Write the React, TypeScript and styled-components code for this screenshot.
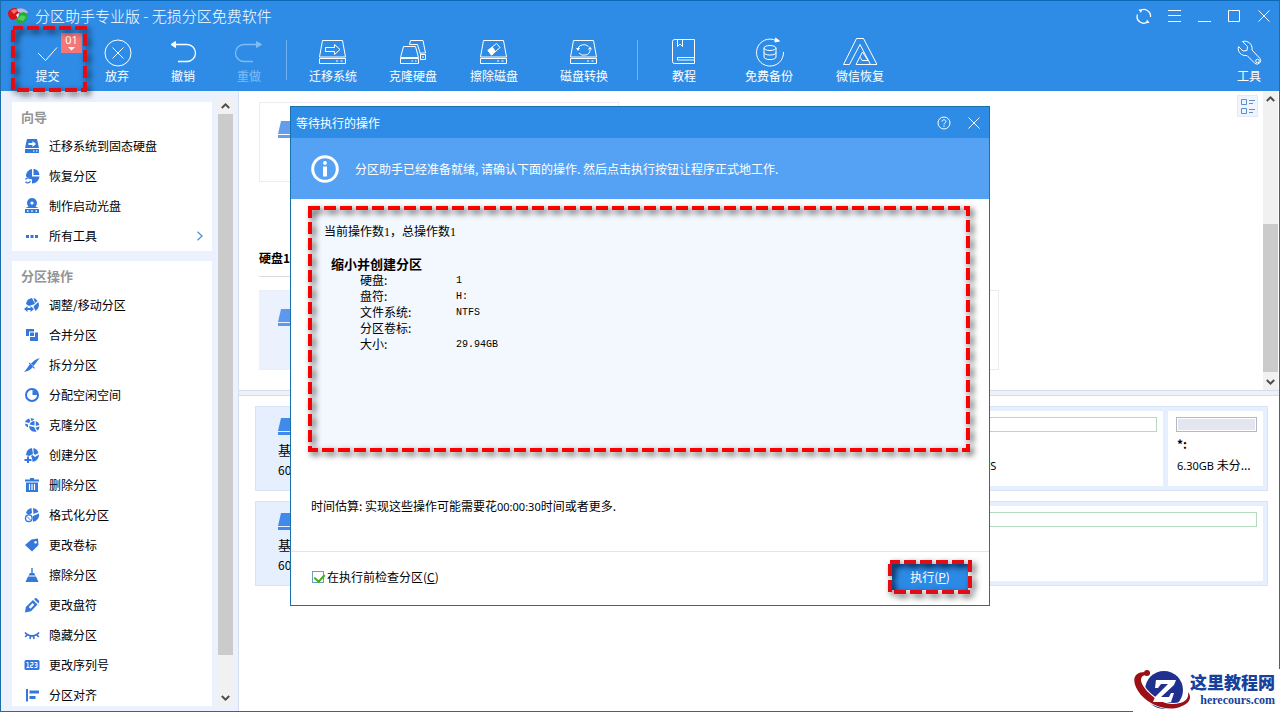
import React from "react";
import styled, { createGlobalStyle } from "styled-components";

const Global = createGlobalStyle`
  * { box-sizing: border-box; }
  html, body { margin: 0; padding: 0; height: 100%; }
  body {
    font-family: "Noto Sans CJK SC", "Noto Sans", sans-serif;
    font-size: 12px;
    line-height: 16px;
    color: #000;
    background: #fff;
    overflow: hidden;
  }
  button {
    font: inherit;
    color: inherit;
    background: none;
    border: 0;
    padding: 0;
    margin: 0;
    text-align: left;
  }
  ul, dl, dd { list-style: none; margin: 0; padding: 0; }
  h1, h2, p { margin: 0; font-size: inherit; font-weight: inherit; }
  svg { display: block; flex: none; }
`;

/* ---------- window frame ---------- */

const AppWindow = styled.div`
  position: relative;
  display: flex;
  flex-direction: column;
  height: 100vh;
  border: 1px solid #1c6ea8;
  border-top-color: #0b69ba;
  background: #fff;
`;

const Header = styled.header`
  position: relative;
  z-index: 1;
  flex: none;
  color: #fff;
  background: #2e8ce7;
`;

const TitleBar = styled.div`
  display: flex;
  align-items: center;
  height: 30px;
  padding-left: 7px;
`;

const AppTitle = styled.h1`
  flex: 1;
  margin-left: 7px;
  font-size: 15px;
  line-height: 20px;
  font-weight: 300;
`;

const WindowButton = styled.button`
  display: flex;
  align-items: center;
  justify-content: center;
  width: 30px;
  height: 30px;
`;

const Toolbar = styled.nav`
  display: flex;
  height: 60px;
  padding-left: 10px;
`;

const ToolButton = styled.button<{ $w: number; $end?: boolean }>`
  position: relative;
  display: flex;
  flex-direction: column;
  align-items: center;
  flex: none;
  width: ${(p) => p.$w}px;
  margin-left: ${(p) => (p.$end ? "auto" : "0")};
  padding-top: 5px;
  color: #fff;
  &:disabled { color: #7fbcf5; }
`;

const ToolSeparator = styled.span`
  width: 1px;
  margin: 9px 6px 11px 4px;
  background: #6fb1f1;
`;

const Badge = styled.span`
  position: absolute;
  top: 2px;
  left: 50px;
  display: flex;
  flex-direction: column;
  align-items: center;
  width: 21px;
  height: 20px;
  font-family: "Noto Sans", sans-serif;
  font-size: 11px;
  line-height: 14px;
  background: #f57676;
`;

/* ---------- red dashed marker ---------- */

const MarkerBox = styled.span<{ $inset: string }>`
  position: absolute;
  inset: ${(p) => p.$inset};
  pointer-events: none;
`;

const MarkerSvg = styled.svg<{ $color?: string }>`
  width: 100%;
  height: 100%;
  overflow: visible;
  filter: drop-shadow(3px 3px 3px rgba(0, 0, 0, 0.7));
  rect {
    x: 2px;
    y: 2px;
    width: calc(100% - 4px);
    height: calc(100% - 4px);
    fill: none;
    stroke: ${(p) => p.$color || "#fb0000"};
    stroke-width: 4;
    stroke-dasharray: 12 4;
    stroke-dashoffset: 2;
  }
`;

function Marker({ inset, color }: { inset: string; color?: string }) {
  return (
    <MarkerBox $inset={inset} aria-hidden="true">
      <MarkerSvg $color={color}>
        <rect />
      </MarkerSvg>
    </MarkerBox>
  );
}

/* ---------- scroll bar ---------- */

const ScrollTrack = styled.div`
  display: flex;
  flex-direction: column;
  flex: none;
  width: 15px;
  background: #f1f1f1;
`;

const ScrollArrow = styled.button`
  display: flex;
  align-items: center;
  justify-content: center;
  flex: none;
  height: 16px;
`;

const ScrollSpace = styled.div<{ $grow: number; $thumb?: boolean }>`
  flex: ${(p) => p.$grow} 1 0;
  background: ${(p) => (p.$thumb ? "#cbcbcb" : "transparent")};
`;

function ScrollBar({ before, thumb, after }: { before: number; thumb: number; after: number }) {
  return (
    <ScrollTrack>
      <ScrollArrow aria-label="向上滚动">
        <svg width="9" height="6" fill="none" stroke="#4d4d4d" strokeWidth="2">
          <path d="M.8 5 4.500 1.400 8.200 5" />
        </svg>
      </ScrollArrow>
      <ScrollSpace $grow={before} />
      <ScrollSpace $grow={thumb} $thumb />
      <ScrollSpace $grow={after} />
      <ScrollArrow aria-label="向下滚动">
        <svg width="9" height="6" fill="none" stroke="#4d4d4d" strokeWidth="2">
          <path d="M.8 1 4.500 4.600 8.200 1" />
        </svg>
      </ScrollArrow>
    </ScrollTrack>
  );
}

/* ---------- side bar ---------- */

const Workspace = styled.div`
  display: flex;
  flex: 1;
  min-height: 0;
`;

const Sidebar = styled.aside`
  display: flex;
  flex: none;
  justify-content: space-between;
  width: 238px;
  padding: 7px 5px 5px 11px;
  border-right: 1px solid #d6dff0;
  background: #ecf2fd;
`;

const SideList = styled.div`
  display: flex;
  flex-direction: column;
  gap: 10px;
  width: 200px;
  padding-top: 4px;
  overflow: hidden;
`;

const SideCard = styled.section`
  flex: none;
  background: #fff;
`;

const SideHeading = styled.h2`
  height: 29px;
  padding-left: 9px;
  font-size: 13px;
  line-height: 29px;
  font-weight: 700;
  color: #949494;
`;

const SideItem = styled.button`
  display: flex;
  align-items: center;
  gap: 9px;
  width: 100%;
  height: 30px;
  padding: 0 8px 0 12px;
  span { flex: 1; }
`;

/* ---------- main area ---------- */

const Main = styled.main`
  display: flex;
  flex-direction: column;
  flex: 1;
  min-width: 0;
`;

const VolumePane = styled.section`
  display: flex;
  flex: none;
  padding-right: 1px;
`;

const VolumeArea = styled.div`
  flex: 1;
  padding: 11px 0 20px 20px;
`;

const VolumeGrid = styled.div`
  display: flex;
  gap: 20px;
`;

const VolumeCard = styled.div<{ $selected?: boolean }>`
  width: 360px;
  height: 80px;
  padding: 18px;
  border: 1px solid ${(p) => (p.$selected ? "#e9effd" : "#ececf0")};
  background: ${(p) => (p.$selected ? "#ecf1fe" : "#fff")};
`;

const DiskHeading = styled.h2`
  width: 720px;
  margin: 68px 0 13px;
  padding-bottom: 10px;
  border-bottom: 1px solid #dcdcdc;
  font-weight: 700;
`;

const PaneTools = styled.div`
  width: 26px;
  padding-top: 4px;
`;

const ViewButton = styled.button`
  display: flex;
  align-items: center;
  justify-content: center;
  width: 21px;
  height: 22px;
  border: 1px solid #e2e9f7;
  background: #f0f4fd;
`;

const Splitter = styled.div`
  flex: none;
  height: 6px;
  border: solid #d5ddea;
  border-width: 1px 0;
  background: #eef1f8;
`;

const DiskPane = styled.section`
  display: flex;
  flex-direction: column;
  gap: 10px;
  flex: 1;
  padding: 10px 11px 10px 16px;
`;

const DiskRow = styled.div<{ $cols: string }>`
  display: grid;
  grid-template-columns: ${(p) => p.$cols};
  gap: 5px;
  height: 85px;
  padding: 4px;
  border: 1px solid #d8e3f4;
  background: #e6effd;
`;

const DiskInfo = styled.div`
  padding: 7px 0 0 18px;
  line-height: 20px;
  svg { margin-bottom: 5px; }
`;

const DiskKind = styled.div`
  font-size: 13px;
`;

const PartitionCell = styled.div`
  min-width: 0;
  padding: 6px 6px 6px 8px;
  line-height: 21px;
  background: #fff;
`;

const UsageBar = styled.div<{ $free?: boolean }>`
  height: 15px;
  margin-bottom: 1px;
  padding: 1px;
  border: 1px solid ${(p) => (p.$free ? "#b3b8c6" : "#b5dabd")};
  background: ${(p) => (p.$free ? "#e3e6ef" : "#fff")};
  background-clip: content-box;
`;

const CellLine = styled.div<{ $bold?: boolean }>`
  padding-left: 1px;
  font-weight: ${(p) => (p.$bold ? 700 : 400)};
  white-space: nowrap;
`;

const Latin = styled.span`
  font-family: "Noto Sans", sans-serif;
  font-size: 11px;
`;

/* ---------- pending operations dialog ---------- */

const DialogLayer = styled.div`
  position: absolute;
  inset: 0;
  z-index: 2;
  display: flex;
  align-items: center;
  justify-content: center;
`;

const Dialog = styled.section`
  width: 700px;
  border: 1px solid #1a72ac;
  background: #fff;
`;

const DialogTitle = styled.header`
  display: flex;
  align-items: center;
  height: 31px;
  padding-left: 5px;
  color: #fff;
  background: #2e8ce7;
  h2 { flex: 1; }
`;

const Banner = styled.div`
  display: flex;
  align-items: center;
  gap: 16px;
  height: 61px;
  padding-left: 20px;
  color: #fff;
  background: #55a1f3;
`;

const DialogBody = styled.div`
  padding: 9px 21px 0 19px;
`;

const Summary = styled.div`
  position: relative;
  min-height: 242px;
  padding: 16px 14px;
  background: #f3f7fe;
`;

const SummaryCount = styled.p`
  font-family: "Liberation Serif", "Noto Sans CJK SC", serif;
`;

const OperationName = styled.h2`
  margin: 16px 0 0 7px;
  font-size: 13px;
  font-weight: 700;
`;

const Details = styled.dl`
  display: grid;
  grid-template-columns: 96px 1fr;
  grid-auto-rows: 16px;
  margin-left: 36px;
  dd {
    font-family: "Liberation Mono", monospace;
    font-size: 10px;
    line-height: 18px;
  }
`;

const Estimate = styled.p`
  padding: 48px 1px 36px;
`;

const DialogFooter = styled.footer`
  display: flex;
  align-items: center;
  justify-content: space-between;
  height: 54px;
  padding: 0 21px 4px;
  border-top: 1px solid #e2e6ea;
`;

const CheckLabel = styled.label`
  display: flex;
  align-items: center;
  gap: 3px;
`;

const CheckBox = styled.input`
  appearance: none;
  position: relative;
  width: 12px;
  height: 12px;
  margin: 0;
  border: 1px solid #6f9cc4;
  background: #fff;
  &:checked::after {
    content: "";
    position: absolute;
    top: 0;
    left: 3px;
    width: 5px;
    height: 8px;
    border: solid #3aaf1e;
    border-width: 0 2px 2px 0;
    transform: rotate(42deg);
  }
`;

const RunButton = styled.button`
  position: relative;
  width: 76px;
  height: 26px;
  color: #fff;
  text-align: center;
  background: #2b8ae6;
  box-shadow: inset 3px 3px 4px rgba(0, 30, 90, 0.45);
`;

/* ---------- site mark ---------- */

const SiteMark = styled.div`
  position: absolute;
  right: -1px;
  bottom: -1px;
  display: flex;
  width: 147px;
  height: 43px;
  background: #fff;
  color: #17419b;
`;

const SiteText = styled.div`
  padding-top: 2px;
  margin-left: -1px;
  font-size: 17px;
  line-height: 22px;
  font-weight: 900;
  text-align: right;
  white-space: nowrap;
`;

const SiteHost = styled.div`
  font-family: "Liberation Serif", serif;
  font-size: 12px;
  line-height: 14px;
  font-weight: 700;
`;

/* ---------- icons ---------- */

const line = { fill: "none", stroke: "currentColor", strokeWidth: 1 };

const DriveBase = () => (
  <>
    <path d="M6.500 4.500h20l3 16.500h-26z" />
    <path d="M3.500 22.500h26v5h-26z" />
    <path d="M20 25h2M24.500 25h2" />
  </>
);

const toolIcons: Record<string, React.ReactNode> = {
  submit: <path d="M7 17l7.500 7.500L26 11.500" />,
  discard: (
    <>
      <circle cx="18" cy="17" r="13" />
      <path d="M12.500 11.500l11 11M23.500 11.500l-11 11" />
    </>
  ),
  undo: (
    <>
      <path d="M8 8.500h13a8.500 8.500 0 0 1 0 17H12" strokeWidth="1.300" />
      <path d="M9.500 5.500v6L5 8.500z" fill="currentColor" />
    </>
  ),
  redo: (
    <>
      <path d="M25 8.500H12a8.500 8.500 0 0 0 0 17h9" strokeWidth="1.300" />
      <path d="M24.500 5.500v6l5-3z" fill="currentColor" />
    </>
  ),
  migrate: (
    <>
      <DriveBase />
      <path d="M9.500 11.500h9v-3l5.500 5-5.500 5v-3h-9z" />
    </>
  ),
  clone: (
    <>
      <path d="M4.500 22.500h18v5h-18zM7.500 10.500h12l3 11h-18zM15.500 25h1.500M19 25h1.500" />
      <path d="M13.500 8.500l1-4H27l2.500 12.500H24.500M24.500 18.500h5v5h-5M26 21h2" />
      <path d="M13.500 8.500h8l3 10v5" />
    </>
  ),
  wipe: (
    <>
      <DriveBase />
      <path d="M11 14.500l8.500-7 3.500 4-8.500 7.500z" />
      <path d="M11 14.500l4-3.500 3.500 4.500-4 3.500z" fill="currentColor" />
    </>
  ),
  convert: (
    <>
      <DriveBase />
      <path d="M11 12.500a6 5 0 0 1 10.500-2M23 14a6 5 0 0 1-11 3" />
      <path d="M9 12h4l-2 3zM21 13.500h4L23 10.500z" fill="currentColor" stroke="none" />
    </>
  ),
  guide: (
    <>
      <path d="M7.500 3.500h20v24h-20a2 2 0 0 1-2-2V5.500a2 2 0 0 1 2-2z" />
      <path d="M10.500 3.500v7l2.500-2.500 2.500 2.500v-7M27.500 21.500h-17v2.500h17" />
    </>
  ),
  backup: (
    <>
      <path d="M24 4.500A13.500 13.500 0 1 0 31.500 16" />
      <path d="M23.500 2l4 3-4.500 1z" fill="currentColor" />
      <ellipse cx="18" cy="12" rx="6" ry="2.500" />
      <path d="M12 12v9c0 3.400 12 3.400 12 0v-9M12 16.500c0 3.400 12 3.400 12 0" />
    </>
  ),
  recover: (
    <>
      <path d="M13.500 2.500h7L34 28.500h-6.500L17 8.500 6.500 28.500H.5z" />
      <path d="M13 28.500L19.500 16l5.500 8.500h-6l-1.500-3M13 28.500h14.500" />
    </>
  ),
  tools: (
    <>
      <path d="M10.500 5.500l5 5-.5 4-4 .5-4.500-4.500C5 15 9 20.500 15 19.500l8 8a3.600 3.600 0 0 0 5-5L20 14C21 8 15.500 4 10.500 5.500z" />
      <circle cx="25.500" cy="25" r="1.800" />
    </>
  ),
};

const ToolIcon = ({ name }: { name: string }) => (
  <svg width="34" height="32" viewBox="0 0 34 32" {...line}>
    {toolIcons[name]}
  </svg>
);

const sideIcons: Record<string, React.ReactNode> = {
  migrate: (
    <>
      <path d="M3 1h10l2 9H1zM1 11h14v4H1z" />
      <path d="M4.500 5h4V3L12 6 8.500 9V7h-4z" fill="#fff" />
      <path d="M9 13h1.500M12 13h1.500" stroke="#fff" />
    </>
  ),
  restore: (
    <>
      <path d="M8 1v7.500h7.500A7.200 7.200 0 0 1 8 15.500v-4L2 8.500A7 7 0 0 1 8 1z" />
      <path d="M9.500 .8a7 7 0 0 1 6 6.200h-6z" />
      <path d="M1.500 11.500a3 3 0 0 1 5-.5M6.500 13a3 3 0 0 1-5 .8" fill="none" stroke="#3b7ad9" strokeWidth="1.300" />
    </>
  ),
  boot: (
    <>
      <path d="M8 0a5 5 0 0 1 3.500 8.500L14.500 10h-13l3-1.500A5 5 0 0 1 8 0zM1 11h14v4H1z" />
      <circle cx="8" cy="5" r="1.600" fill="#fff" />
      <path d="M3 13h1.500M7.200 13h1.500M11.500 13H13" stroke="#fff" strokeWidth="1.500" />
    </>
  ),
  all: <path d="M2 7h3v3H2zM6.500 7h3v3h-3zM11 7h3v3h-3z" />,
  resize: (
    <>
      <path d="M2 7a7 7 0 0 1 6-6l3 6-6 2zM9.500 1a7 7 0 0 1 4 3l-2.500 2zM14.200 5a7 7 0 0 1-2.700 9l-2-4.500z" />
      <path d="M0 12l3.500-3v2h3V9L10 12l-3.500 3v-2h-3v2z" />
    </>
  ),
  merge: <path d="M2 2h8v2.500H5V9H2zM11 5.500h3V14H6v-4h5zM6 5.500h4V9H6z" />,
  split: (
    <path d="M15.800 1L9.500 9 7 6.500C10 3.500 13 1.500 15.800 1zM6 7.200l2.800 2.800C7 12.500 4 14.500 0 15 2.500 13 3.500 9.500 6 7.200zM5.500 5.500l5.500 5.500-.8.800-5.500-5.500z" />
  ),
  free: (
    <>
      <circle cx="8" cy="8" r="6" fill="none" stroke="#2f74dc" strokeWidth="2" />
      <path d="M8.500 3v5h5A5 5 0 0 0 8.500 3z" />
    </>
  ),
  clone: (
    <>
      <path d="M1 5a6 6 0 0 1 4-3.500L6.500 4 5 6zM6.500 1.200a6 6 0 0 1 4 1.300L7.500 4zM.8 6.500L4 7.500v3a5 5 0 0 1-3.200-4z" />
      <path d="M5.500 7.500a5.500 5.500 0 0 1 5-3.500v4.500zM11.800 4a5.500 5.500 0 0 1 3.700 4l-3.700 1zM5.200 9l4.800 1 2.500 4.500A5.500 5.500 0 0 1 5.200 9zM15.500 9.500a5 5 0 0 1-2 4.200L11.500 10.500z" />
    </>
  ),
  create: (
    <>
      <path d="M2 8a7 7 0 0 1 6-7l1 6-4 2zM9.500 1a7 7 0 0 1 5 5L11 8l-1.500-2zM15 7.500a7 7 0 0 1-6.500 7.300L8 11l-1-2 1.500-1 2.500 2z" />
      <path d="M3 9.500h2V12h2.500v2H5v2H3v-2H.5v-2H3z" />
    </>
  ),
  remove: (
    <>
      <path d="M6 1h4v1.500h5v2H1v-2h5zM2 5.500h12V15H2z" />
      <path d="M5.500 7v6M8 7v6M10.500 7v6" stroke="#fff" strokeWidth="1.200" />
    </>
  ),
  format: (
    <>
      <path d="M2 6a7 7 0 0 1 5.500-5L8 6 5 8zM9 1a7 7 0 0 1 5.500 4L9.500 7zM15 6.500a7 7 0 0 1-6 8.300V9z" />
      <circle cx="4.800" cy="11.200" r="3.300" fill="#fff" stroke="#3b7ad9" strokeWidth="1.400" />
      <path d="M3 9.500l3.800 3.800" stroke="#3b7ad9" />
    </>
  ),
  label: <path fillRule="evenodd" d="M7.500 2.500l6.500-1 .5 6.500L8 14.500 1 8zM11.500 4a1.300 1.300 0 1 0 .1 0z" />,
  wipe: <path d="M7.300 1h1.400v5H10l1.500 2.500h-7L6 6h1.300zM4 9.500h8L14.500 15h-13z" />,
  letter: (
    <path
      fillRule="evenodd"
      d="M10 2L12 .8 15.300 4 14.500 6.500zM9 3l4.500 4.500-6.500 6.700L1 15.500 1.800 10zM8.500 6l-3.700 4 1.700 1.700 3.800-4z"
    />
  ),
  hide: (
    <path
      d="M1 5.500c3.500 4.500 10.500 4.500 14 0M3 8l-1.800 2M6.500 9.500L6 12M9.500 9.500l.5 2.500M13 8l1.800 2"
      fill="none"
      stroke="#3b72cf"
      strokeWidth="1.700"
    />
  ),
  serial: (
    <>
      <rect x="0.500" y="3" width="15" height="10" rx="1.500" />
      <path
        d="M2.500 5.500H4v5M2.500 10.500h3M6.500 5.500h2.500V8H6.700v2.500h2.500M10.500 5.500H13v5h-2.500M11 8h2"
        fill="none"
        stroke="#fff"
      />
    </>
  ),
  align: <path d="M2 2h2v12.500H2zM5.500 3.500H15v3H5.500zM5.500 9h6v3h-6z" />,
};

const SideIcon = ({ name }: { name: string }) => (
  <svg width="16" height="16" viewBox="0 0 16 16" fill="#3478dc">
    {sideIcons[name]}
  </svg>
);

const DriveGlyph = ({ color }: { color: string }) => (
  <svg width="36" height="17" viewBox="0 0 36 17" fill={color}>
    <path d="M3 0h30l3 13H0zM0 14h36v3H0z" />
  </svg>
);

const AppLogo = () => (
  <svg width="20" height="18" viewBox="0 0 20 18">
    <path d="M0 6C0 3 4 1 8 1l3 4-1 6-5 2C2 13 0 9 0 6z" fill="#d8131b" />
    <path d="M3 4c2-2 5-2 7-1L6 7z" fill="#ff6d62" />
    <path d="M9 2c5-1.500 10 .5 11 4l-6 0-4-1z" fill="#c9b9cf" />
    <path d="M9 8l6-3c3 0 5 3 4.500 6-1 4-5.500 6-9.500 5l-4-2 6-3z" fill="#1fae3c" />
    <path d="M9 12l5-4 4 2-3 4z" fill="#55cf5e" />
    <path d="M8 8l3-2-1 5z" fill="#fff" />
  </svg>
);

const SiteLogo = () => (
  <svg width="58" height="42" viewBox="0 0 58 42">
    <circle cx="31" cy="21" r="19" fill="#20308f" />
    <path
      d="M12 3C-1 3-2 15 9 27c11 11 28 15 40 10 8-3 10-9 6-14 1 5-2 9-8 11-10 3-22-1-31-10C7 15 5 7 13 6z"
      fill="#fff"
      stroke="#fff"
      strokeWidth="2"
    />
    <path
      d="M12 3C-1 3-2 14 8 26c11 12 29 17 41 11 8-3 10-9 6-14 1 6-2 9-8 11-11 3-22-1-31-10C7 15 5 7 13 6z"
      fill="#9b1014"
    />
    <circle cx="14" cy="4" r="3" fill="#9b1014" />
    <path d="M23 11h20l-2 5-13 12h8l2-4h3l-3 9H20l2-5 13-13h-7l-3 4h-3z" fill="#fff" />
  </svg>
);

/* ---------- data ---------- */

const diskTools = [
  { icon: "migrate", label: "迁移系统", w: 80 },
  { icon: "clone", label: "克隆硬盘", w: 80 },
  { icon: "wipe", label: "擦除磁盘", w: 82 },
  { icon: "convert", label: "磁盘转换", w: 98 },
];

const extraTools = [
  { icon: "guide", label: "教程", w: 80 },
  { icon: "backup", label: "免费备份", w: 90 },
  { icon: "recover", label: "微信恢复", w: 92 },
];

const wizards = [
  { icon: "migrate", label: "迁移系统到固态硬盘" },
  { icon: "restore", label: "恢复分区" },
  { icon: "boot", label: "制作启动光盘" },
  { icon: "all", label: "所有工具", more: true },
];

const partitionActions = [
  { icon: "resize", label: "调整/移动分区" },
  { icon: "merge", label: "合并分区" },
  { icon: "split", label: "拆分分区" },
  { icon: "free", label: "分配空闲空间" },
  { icon: "clone", label: "克隆分区" },
  { icon: "create", label: "创建分区" },
  { icon: "remove", label: "删除分区" },
  { icon: "format", label: "格式化分区" },
  { icon: "label", label: "更改卷标" },
  { icon: "wipe", label: "擦除分区" },
  { icon: "letter", label: "更改盘符" },
  { icon: "hide", label: "隐藏分区" },
  { icon: "serial", label: "更改序列号" },
  { icon: "align", label: "分区对齐" },
];

const details = [
  ["硬盘:", "1"],
  ["盘符:", "H:"],
  ["文件系统:", "NTFS"],
  ["分区卷标:", ""],
  ["大小:", "29.94GB"],
];

interface SideEntry {
  icon: string;
  label: string;
  more?: boolean;
}

function SideSection({ title, items }: { title: string; items: SideEntry[] }) {
  return (
    <SideCard>
      <SideHeading>{title}</SideHeading>
      <ul>
        {items.map((item) => (
          <li key={item.label}>
            <SideItem>
              <SideIcon name={item.icon} />
              <span>{item.label}</span>
              {item.more && (
                <svg width="8" height="10" fill="none" stroke="#4a93e0" strokeWidth="1.300">
                  <path d="M1.500 .8L6 5 1.500 9.200" />
                </svg>
              )}
            </SideItem>
          </li>
        ))}
      </ul>
    </SideCard>
  );
}

function DiskSummary() {
  return (
    <DiskInfo>
      <DriveGlyph color="#4289ec" />
      <DiskKind>基本</DiskKind>
      <div>60.00GB</div>
    </DiskInfo>
  );
}

export default function App() {
  return (
    <AppWindow>
      <Global />
      <Header>
        <TitleBar>
          <AppLogo />
          <AppTitle>分区助手专业版 - 无损分区免费软件</AppTitle>
          <WindowButton aria-label="刷新">
            <svg width="16" height="16" {...line} strokeWidth="1.200">
              <path d="M4 3A6.500 6.500 0 0 1 14.500 9M1.500 6.500A6.500 6.500 0 0 0 12 13.500" />
              <path d="M2.500 1.500h3.500L5 5zM13.500 15H10L11 11.500z" fill="currentColor" stroke="none" />
            </svg>
          </WindowButton>
          <WindowButton aria-label="菜单">
            <svg width="14" height="12" {...line}>
              <path d="M1 .5h13M1 5.500h13M1 11.500h13" />
            </svg>
          </WindowButton>
          <WindowButton aria-label="最小化">
            <svg width="14" height="12" {...line}>
              <path d="M1 11.500h13" />
            </svg>
          </WindowButton>
          <WindowButton aria-label="最大化">
            <svg width="12" height="12" {...line}>
              <path d="M.5 .5h11v11H.5z" />
            </svg>
          </WindowButton>
          <WindowButton aria-label="关闭">
            <svg width="12" height="12" {...line}>
              <path d="M.5 .5l11 11M11.500 .5l-11 11" />
            </svg>
          </WindowButton>
        </TitleBar>
        <Toolbar>
          <ToolButton $w={73}>
            <ToolIcon name="submit" />
            提交
            <Badge>
              01
              <svg width="7" height="4" fill="#fff">
                <path d="M0 0h7L3.500 3.500z" />
              </svg>
            </Badge>
            <Marker inset="-5px -3px -1px 0" color="#e30b14" />
          </ToolButton>
          <ToolButton $w={66}>
            <ToolIcon name="discard" />
            放弃
          </ToolButton>
          <ToolButton $w={66}>
            <ToolIcon name="undo" />
            撤销
          </ToolButton>
          <ToolButton $w={66} disabled>
            <ToolIcon name="redo" />
            重做
          </ToolButton>
          <ToolSeparator />
          {diskTools.map((t) => (
            <ToolButton key={t.label} $w={t.w}>
              <ToolIcon name={t.icon} />
              {t.label}
            </ToolButton>
          ))}
          <ToolSeparator />
          {extraTools.map((t) => (
            <ToolButton key={t.label} $w={t.w}>
              <ToolIcon name={t.icon} />
              {t.label}
            </ToolButton>
          ))}
          <ToolButton $w={60} $end>
            <ToolIcon name="tools" />
            工具
          </ToolButton>
        </Toolbar>
      </Header>

      <Workspace>
        <Sidebar>
          <SideList>
            <SideSection title="向导" items={wizards} />
            <SideSection title="分区操作" items={partitionActions} />
          </SideList>
          <ScrollBar before={0} thumb={542} after={35} />
        </Sidebar>

        <Main>
          <VolumePane>
            <VolumeArea>
              <VolumeGrid>
                <VolumeCard>
                  <DriveGlyph color="#659ded" />
                </VolumeCard>
              </VolumeGrid>
              <DiskHeading>硬盘1</DiskHeading>
              <VolumeGrid>
                <VolumeCard $selected>
                  <DriveGlyph color="#5b98ee" />
                </VolumeCard>
                <VolumeCard>
                  <DriveGlyph color="#659ded" />
                </VolumeCard>
              </VolumeGrid>
            </VolumeArea>
            <PaneTools>
              <ViewButton aria-label="切换视图">
                <svg width="14" height="15" fill="none" stroke="#5b8fd0">
                  <path d="M.5 .5h5v5h-5zM.5 9.500h5v5h-5zM8 1.500h6M8 4.500h4M8 10.500h6M8 13.500h4" />
                </svg>
              </ViewButton>
            </PaneTools>
            <ScrollBar before={117} thumb={148} after={2} />
          </VolumePane>
          <Splitter />
          <DiskPane>
            <DiskRow $cols="100px 1fr 248px 95px">
              <DiskSummary />
              <PartitionCell>
                <UsageBar />
              </PartitionCell>
              <PartitionCell>
                <UsageBar />
                <CellLine $bold>H:</CellLine>
                <CellLine>
                  <Latin>29.94GB NTFS</Latin>
                </CellLine>
              </PartitionCell>
              <PartitionCell>
                <UsageBar $free />
                <CellLine $bold>*:</CellLine>
                <CellLine>
                  <Latin>6.30GB</Latin> 未分...
                </CellLine>
              </PartitionCell>
            </DiskRow>
            <DiskRow $cols="100px 1fr">
              <DiskSummary />
              <PartitionCell>
                <UsageBar />
              </PartitionCell>
            </DiskRow>
          </DiskPane>
        </Main>
      </Workspace>

      <DialogLayer>
        <Dialog role="dialog" aria-labelledby="pending-title">
          <DialogTitle>
            <h2 id="pending-title">等待执行的操作</h2>
            <WindowButton aria-label="帮助">
              <svg width="14" height="14" {...line}>
                <circle cx="7" cy="7" r="6" />
                <path d="M5 5.600C5 3.200 9 3.200 9 5.500 9 7 7 6.800 7 8.500M7 9.500v1.300" />
              </svg>
            </WindowButton>
            <WindowButton aria-label="关闭对话框">
              <svg width="12" height="12" {...line}>
                <path d="M.5 .5l11 11M11.500 .5l-11 11" />
              </svg>
            </WindowButton>
          </DialogTitle>
          <Banner>
            <svg width="28" height="28" fill="#fff">
              <circle cx="14" cy="14" r="12.300" fill="none" stroke="#fff" strokeWidth="3" />
              <circle cx="14" cy="8" r="1.900" />
              <path d="M12 11.500h4v10h-4z" />
            </svg>
            <p>分区助手已经准备就绪, 请确认下面的操作. 然后点击执行按钮让程序正式地工作.</p>
          </Banner>
          <DialogBody>
            <Summary>
              <SummaryCount>当前操作数1，总操作数1</SummaryCount>
              <OperationName>缩小并创建分区</OperationName>
              <Details>
                {details.map(([name, value]) => (
                  <React.Fragment key={name}>
                    <dt>{name}</dt>
                    <dd>{value}</dd>
                  </React.Fragment>
                ))}
              </Details>
              <Marker inset="-2px" />
            </Summary>
            <Estimate>
              时间估算: 实现这些操作可能需要花<Latin>00:00:30</Latin>时间或者更多.
            </Estimate>
          </DialogBody>
          <DialogFooter>
            <CheckLabel>
              <CheckBox type="checkbox" defaultChecked />
              <span>
                在执行前检查分区(<u>C</u>)
              </span>
            </CheckLabel>
            <RunButton>
              执行(<u>P</u>)
              <Marker inset="-4px" color="#e30b14" />
            </RunButton>
          </DialogFooter>
        </Dialog>
      </DialogLayer>

      <SiteMark>
        <SiteLogo />
        <SiteText>
          这里教程网
          <SiteHost>herecours.com</SiteHost>
        </SiteText>
      </SiteMark>
    </AppWindow>
  );
}
